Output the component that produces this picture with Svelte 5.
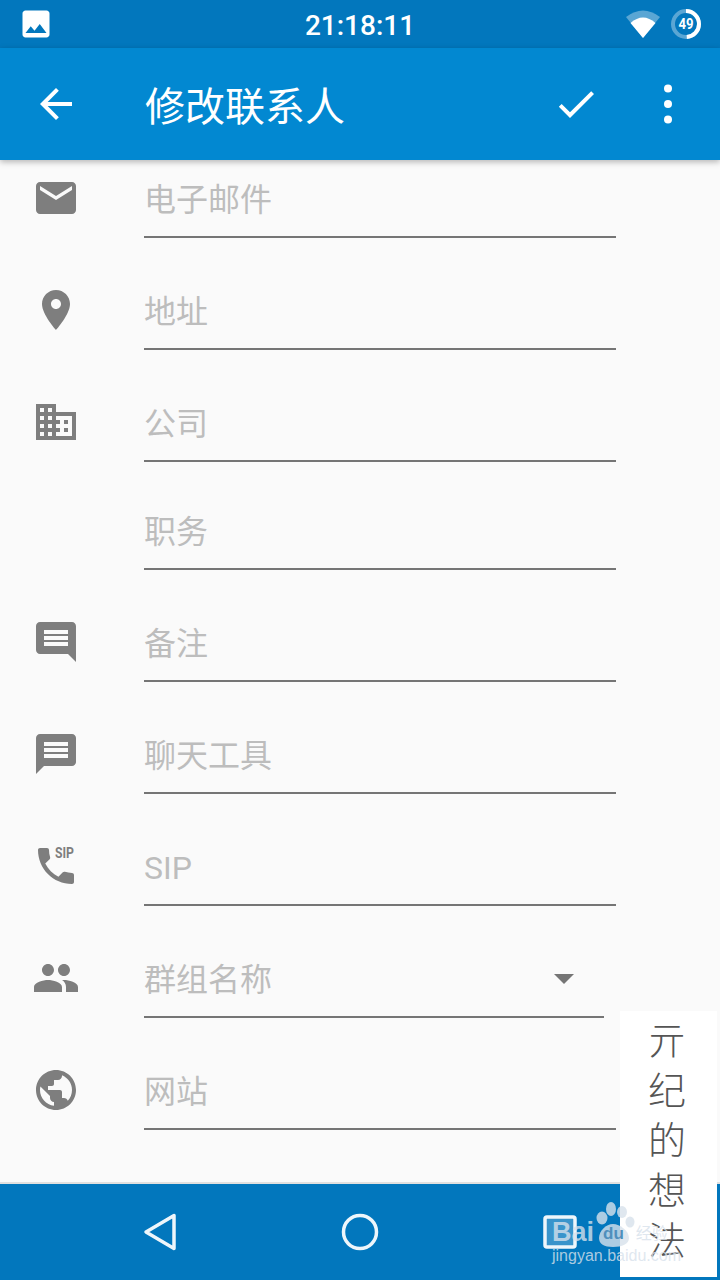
<script>
	const rows = [
		{ label: '电子邮件', d: 'M20 4H4c-1.1 0-2 .9-2 2v12c0 1.1.9 2 2 2h16c1.1 0 2-.9 2-2V6c0-1.1-.9-2-2-2zm0 4l-8 5-8-5V6l8 5 8-5v2z' },
		{ label: '地址', d: 'M12 2C8.13 2 5 5.13 5 9c0 5.25 7 13 7 13s7-7.75 7-13c0-3.87-3.13-7-7-7zm0 9.5c-1.38 0-2.5-1.12-2.5-2.5s1.12-2.5 2.5-2.5 2.5 1.12 2.5 2.5-1.12 2.5-2.5 2.5z' },
		{ label: '公司', d: 'M12 7V3H2v18h20V7H12zM6 19H4v-2h2v2zm0-4H4v-2h2v2zm0-4H4V9h2v2zm0-4H4V5h2v2zm4 12H8v-2h2v2zm0-4H8v-2h2v2zm0-4H8V9h2v2zm0-4H8V5h2v2zm10 12h-8v-2h2v-2h-2v-2h2v-2h-2V9h8v10zm-2-8h-2v2h2v-2zm0 4h-2v2h2v-2z' },
		{ label: '职务', sub: true },
		{ label: '备注', d: 'M21.99 4c0-1.1-.89-2-1.99-2H4c-1.1 0-2 .9-2 2v12c0 1.1.9 2 2 2h14l4 4-.01-18zM18 14H6v-2h12v2zm0-3H6V9h12v2zm0-3H6V6h12v2z' },
		{ label: '聊天工具', d: 'M20 2H4c-1.1 0-1.99.9-1.99 2L2 22l4-4h14c1.1 0 2-.9 2-2V4c0-1.1-.9-2-2-2zm-2 12H6v-2h12v2zm0-3H6V9h12v2zm0-3H6V6h12v2z' },
		{ label: 'SIP', sip: true, d: 'M20 15.5c-1.25 0-2.45-.2-3.57-.57-.35-.11-.74-.03-1.02.24l-2.2 2.2c-2.83-1.44-5.15-3.75-6.59-6.59l2.2-2.21c.28-.26.36-.65.25-1C8.7 6.45 8.5 5.25 8.5 4c0-.55-.45-1-1-1H4c-.55 0-1 .45-1 1 0 9.39 7.61 17 17 17 .55 0 1-.45 1-1v-3.5c0-.55-.45-1-1-1z' },
		{ label: '群组名称', select: true, d: 'M16 11c1.66 0 2.99-1.34 2.99-3S17.66 5 16 5c-1.66 0-3 1.34-3 3s1.34 3 3 3zm-8 0c1.66 0 2.99-1.34 2.99-3S9.66 5 8 5C6.34 5 5 6.34 5 8s1.34 3 3 3zm0 2c-2.33 0-7 1.17-7 3.5V19h14v-2.5c0-2.33-4.67-3.5-7-3.5zm8 0c-.29 0-.62.02-.97.05 1.16.84 1.97 1.97 1.97 3.45V19h6v-2.5c0-2.33-4.67-3.5-7-3.5z' },
		{ label: '网站', d: 'M12 2C6.48 2 2 6.48 2 12s4.48 10 10 10 10-4.48 10-10S17.52 2 12 2zm-1 17.93c-3.95-.49-7-3.85-7-7.93 0-.62.08-1.21.21-1.79L9 15v1c0 1.1.9 2 2 2v1.93zm6.9-2.54c-.26-.81-1-1.39-1.9-1.39h-1v-3c0-.55-.45-1-1-1H8v-2h2c.55 0 1-.45 1-1V7h2c1.1 0 2-.9 2-2v-.41c2.93 1.19 5 4.06 5 7.41 0 2.08-.8 3.97-2.1 5.39z' }
	];
</script>

<div class="screen">
	<div class="status">
		<svg class="photo" width="36" height="36" viewBox="0 0 24 24"><path fill="#fff" d="M21 19V5c0-1.1-.9-2-2-2H5c-1.1 0-2 .9-2 2v14c0 1.1.9 2 2 2h14c1.1 0 2-.9 2-2zM8.5 13.5l2.5 3.01L14.5 12l4.5 6H5l3.5-4.5z" /></svg>
		<span class="time">21:18:11</span>
		<div class="sys">
			<svg width="36" height="30" viewBox="0 0 36 30">
				<path fill="#fff" fill-opacity=".35" d="M18 29L1 8Q18-5 35 8z" />
				<path fill="#fff" d="M18 29L5.5 14Q18 3 30.5 14z" />
			</svg>
			<svg width="32" height="32" viewBox="0 0 32 32">
				<circle cx="16" cy="16" r="13" fill="none" stroke="#fff" stroke-opacity=".35" stroke-width="4" />
				<circle cx="16" cy="16" r="13" fill="none" stroke="#fff" stroke-width="4" pathLength="100" stroke-dasharray="49 100" transform="rotate(-90 16 16)" />
				<text x="16" y="21" text-anchor="middle" class="level" textLength="15" lengthAdjust="spacingAndGlyphs">49</text>
			</svg>
		</div>
	</div>

	<header class="bar">
		<svg width="48" height="48" viewBox="0 0 24 24"><path fill="#fff" d="M20 11H7.83l5.59-5.59L12 4l-8 8 8 8 1.41-1.41L7.83 13H20v-2z" /></svg>
		<h1>修改联系人</h1>
		<svg class="done" width="48" height="48" viewBox="0 0 24 24"><path fill="#fff" d="M9 16.17L4.83 12l-1.42 1.41L9 19 21 7l-1.41-1.41z" /></svg>
		<svg class="more" width="48" height="48" viewBox="0 0 48 48">
			<circle cx="24" cy="8.5" r="4" fill="#fff" />
			<circle cx="24" cy="24" r="4" fill="#fff" />
			<circle cx="24" cy="39.5" r="4" fill="#fff" />
		</svg>
	</header>

	<main class="list">
		<div class="scroll">
			{#each rows as row}
				<div class="row" class:sub={row.sub}>
					<div class="icon">
						{#if row.d}
							<svg width="48" height="48" viewBox="0 0 24 24">
								<path fill="#7e7e7e" d={row.d} />
								{#if row.sip}
									<text x="11.5" y="8" class="sip" textLength="9.5" lengthAdjust="spacingAndGlyphs">SIP</text>
								{/if}
							</svg>
						{/if}
					</div>
					<div class="field" class:select={row.select} class:latin={row.sip}>
						<span>{row.label}</span>
						{#if row.select}<i class="caret"></i>{/if}
					</div>
				</div>
			{/each}
		</div>
	</main>

	<nav class="nav">
		<div class="key">
			<svg width="40" height="44" viewBox="0 0 40 44"><path fill="none" stroke="#eef6fb" stroke-width="3.5" stroke-linejoin="round" d="M6 22L34 5.5v33z" /></svg>
		</div>
		<div class="key">
			<svg width="40" height="40" viewBox="0 0 40 40"><circle cx="20" cy="20" r="16.5" fill="none" stroke="#eef6fb" stroke-width="3.5" /></svg>
		</div>
		<div class="key">
			<svg width="36" height="36" viewBox="0 0 36 36"><rect x="3" y="3" width="30" height="30" rx="2" fill="#ffffff" fill-opacity=".22" stroke="#eef6fb" stroke-width="3.5" /></svg>
		</div>
	</nav>

	<div class="note"><span>亓纪的想法</span></div>

	<div class="baidu">
		<div class="mark">
			<span class="bai">Bai</span>
			<svg class="paw" width="46" height="50" viewBox="0 0 46 50">
				<ellipse cx="7" cy="16" rx="5.5" ry="6.5" />
				<ellipse cx="16" cy="7" rx="5" ry="7" />
				<ellipse cx="27" cy="10" rx="5" ry="6" />
				<ellipse cx="35" cy="20" rx="4.5" ry="5.5" />
				<path d="M18 22c-7 0-14 7-14 14 0 6 5 9 14 9s16-3 16-9c0-7-9-14-16-14z" />
			</svg>
			<span class="du">du</span>
			<span class="cn">经验</span>
		</div>
		<div class="url">jingyan.baidu.com</div>
	</div>
</div>

<style>
	:global(body) {
		margin: 0;
		background: #fafafa;
	}

	.screen {
		position: relative;
		display: flex;
		flex-direction: column;
		width: 720px;
		height: 1280px;
		overflow: hidden;
		background: #fafafa;
		font-family: "Noto Sans CJK SC", Roboto, sans-serif;
	}

	.status {
		display: grid;
		grid-template-columns: 1fr auto 1fr;
		align-items: center;
		flex: none;
		height: 48px;
		padding: 0 18px;
		background: #0277bd;
	}
	.time {
		padding-top: 2px;
		color: #fff;
		font: 500 28px Roboto, sans-serif;
	}
	.sys {
		display: flex;
		align-items: center;
		justify-content: flex-end;
		gap: 9px;
	}
	.level {
		fill: #fff;
		font: 700 15px Roboto, sans-serif;
	}

	.bar {
		position: relative;
		z-index: 2;
		display: flex;
		align-items: center;
		flex: none;
		height: 112px;
		padding: 0 28px 0 32px;
		background: #0288d1;
		box-shadow: 0 2px 6px rgba(0, 0, 0, 0.28);
	}
	.bar h1 {
		margin: 0 0 0 65px;
		color: #fff;
		font-size: 40px;
		font-weight: 400;
		line-height: 48px;
	}
	.done {
		margin-left: auto;
	}
	.more {
		margin-left: 44px;
	}

	.list {
		flex: 1;
		overflow: hidden;
	}
	.scroll {
		margin-top: -34px;
	}
	.row {
		display: flex;
		align-items: flex-start;
		height: 112px;
		box-sizing: border-box;
		padding: 48px 0 0 32px;
	}
	.row.sub {
		height: 108px;
		padding-top: 44px;
	}
	.icon {
		flex: none;
		width: 48px;
		height: 48px;
		margin-right: 64px;
	}
	.icon svg {
		display: block;
	}
	.sip {
		fill: #7e7e7e;
		font: 700 7px Roboto, sans-serif;
	}
	.field {
		display: flex;
		align-items: center;
		justify-content: space-between;
		box-sizing: border-box;
		width: 472px;
		height: 64px;
		padding-bottom: 16px;
		border-bottom: 2px solid #757575;
		color: #bdbdbd;
		font-size: 32px;
		line-height: 46px;
	}
	.field.latin {
		padding-bottom: 10px;
		font-family: Roboto, sans-serif;
	}
	.field.select {
		width: 460px;
		padding-right: 30px;
	}
	.caret {
		width: 0;
		height: 0;
		margin-top: 4px;
		border-top: 10px solid #757575;
		border-left: 10px solid transparent;
		border-right: 10px solid transparent;
	}

	.nav {
		display: flex;
		justify-content: center;
		flex: none;
		height: 96px;
		border-top: 2px solid #e0e0e0;
		background: #0277bd;
	}
	.key {
		display: flex;
		align-items: center;
		justify-content: center;
		width: 200px;
	}

	.note {
		position: absolute;
		left: 620px;
		top: 1011px;
		display: flex;
		justify-content: center;
		box-sizing: border-box;
		width: 97px;
		height: 266px;
		padding: 10px 4px 0 0;
		background: #fff;
		color: #555;
		font-size: 38px;
		font-weight: 300;
		letter-spacing: 12px;
		line-height: 44px;
	}
	.note span {
		writing-mode: vertical-rl;
	}

	.baidu {
		position: absolute;
		left: 552px;
		top: 1216px;
		color: rgba(215, 225, 235, 0.8);
	}
	.mark {
		display: flex;
		align-items: center;
		height: 32px;
		white-space: nowrap;
	}
	.bai {
		font: 700 27px "Liberation Sans", sans-serif;
	}
	.paw {
		flex: none;
		margin: -10px 0 0 1px;
		fill: currentColor;
	}
	.du {
		margin: 4px 0 0 -38px;
		color: #4f8fbc;
		font: 700 17px "Liberation Sans", sans-serif;
	}
	.cn {
		margin-left: 12px;
		font-size: 16px;
	}
	.url {
		margin-top: -2px;
		font: 400 16px/20px "Liberation Sans", sans-serif;
		white-space: nowrap;
	}
</style>
